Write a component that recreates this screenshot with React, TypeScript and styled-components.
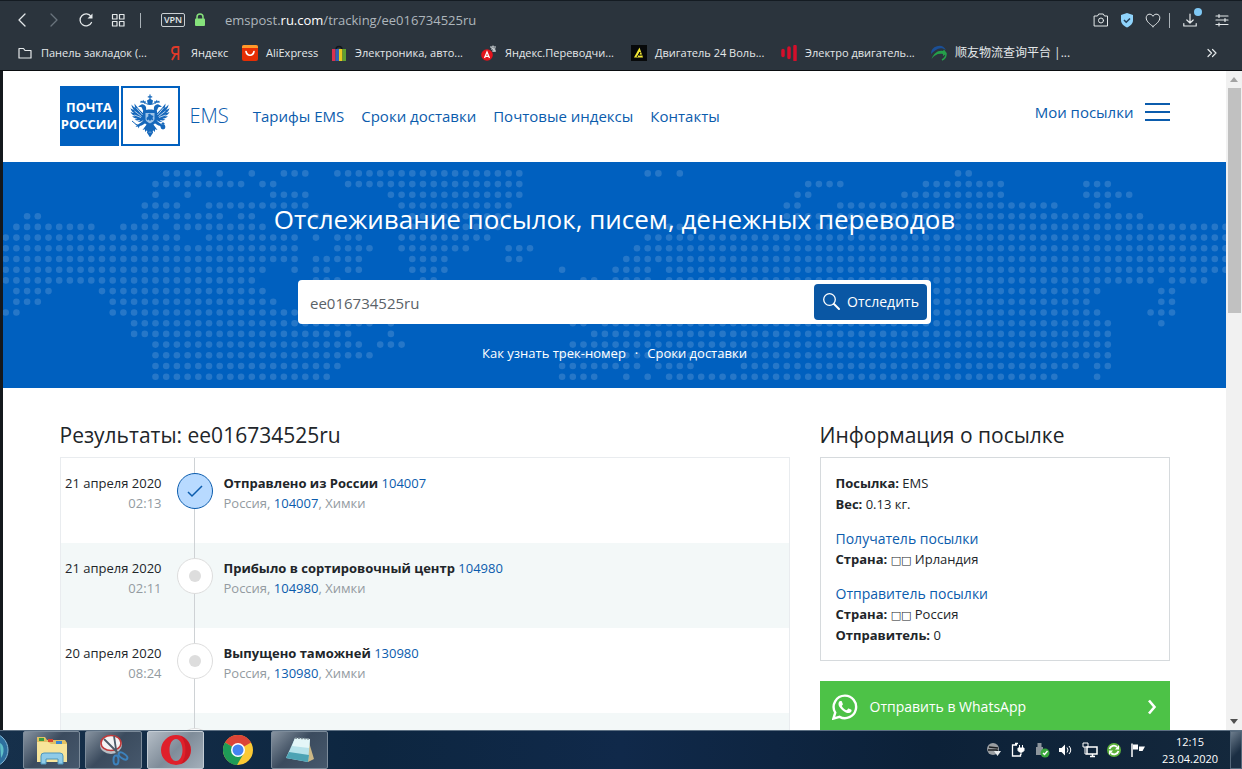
import React from 'react';
import styled, { createGlobalStyle, css } from 'styled-components';

const GlobalStyle = createGlobalStyle`
  *, *::before, *::after { box-sizing: border-box; }
  body {
    margin: 0;
    font-family: 'Open Sans', 'Noto Sans', 'Noto Sans CJK SC', sans-serif;
    font-size: 13px;
    line-height: 20px;
    color: #212529;
  }
  h1, h2, h3, p, ol, ul { margin: 0; padding: 0; font-weight: 400; }
  ol, ul { list-style: none; }
  a { color: #0b5cad; text-decoration: none; }
  button { font: inherit; border: 0; padding: 0; background: none; color: inherit; cursor: pointer; }
  svg { display: block; flex: none; }
`;

const Screen = styled.div`
  display: flex;
  flex-direction: column;
  height: 100vh;
  overflow: hidden;
`;

/* ---------- browser chrome ---------- */

const Chrome = styled.header`
  flex: none;
  background: #2b343d;
  border-top: 1px solid #141b22;
  border-bottom: 1px solid #0a0d10;
  color: #e4e8ea;
`;

const Toolbar = styled.div`
  display: flex;
  align-items: center;
  height: 38px;
  padding: 0 12px 0 14px;
`;

const ToolGroup = styled.div<{ $gap: number }>`
  display: flex;
  align-items: center;
  gap: ${p => p.$gap}px;
`;

const ToolButton = styled.button`
  position: relative;
  width: 16px;
  height: 16px;
`;

const Divider = styled.span<{ $before: number; $after: number }>`
  width: 1px;
  height: 15px;
  margin: 0 ${p => p.$after}px 0 ${p => p.$before}px;
  background: #aab2b8;
`;

const VpnBadge = styled.button`
  width: 24px;
  height: 14px;
  margin: 0 7px 0 6px;
  border: 1px solid #c9ced2;
  border-radius: 2px;
  font-size: 9px;
  line-height: 12px;
  font-weight: 600;
`;

const Address = styled.p`
  flex: 1;
  margin-left: 17px;
  color: #aeb6bc;
  b { font-weight: 400; color: #ffffff; }
`;

const NotifyDot = styled.span`
  position: absolute;
  top: -4px;
  right: -4px;
  width: 8px;
  height: 8px;
  border-radius: 50%;
  background: #7fc8f5;
`;

const Bookmarks = styled.nav`
  display: flex;
  align-items: center;
  gap: 12px;
  height: 31px;
  padding: 0 22px 4px 17px;
`;

const Bookmark = styled.a`
  display: flex;
  align-items: center;
  gap: 8px;
  font-size: 11px;
  color: #e4e8ea;
  &:lang(zh) { font-size: 12px; }
`;

const BookmarkLabel = styled.span<{ $width: number }>`
  width: ${p => p.$width}px;
  white-space: nowrap;
`;

const More = styled.button`
  margin-left: auto;
  width: 16px;
  height: 16px;
`;

/* ---------- page ---------- */

const Viewport = styled.div`
  flex: 1;
  min-height: 0;
  display: flex;
  border-left: 3px solid #14181d;
`;

const Page = styled.div`
  flex: 1;
  min-width: 0;
  overflow: hidden;
  background: #ffffff;
`;

const container = css`
  width: 100%;
  max-width: 1140px;
  margin: 0 auto;
  padding: 0 15px;
`;

const SiteHeader = styled.header`
  ${container}
  display: flex;
  align-items: center;
  height: 91px;
  padding-bottom: 2px;
`;

const Logo = styled.a`
  display: flex;
  align-items: center;
  gap: 2px;
  font-size: 20px;
  font-weight: 300;
`;

const LogoText = styled.span`
  display: flex;
  flex-direction: column;
  align-items: center;
  justify-content: center;
  width: 59px;
  height: 60px;
  background: #0060bf;
  color: #ffffff;
  font-size: 13px;
  font-weight: 700;
  line-height: 17px;
`;

const LogoCrest = styled.span`
  display: flex;
  align-items: center;
  justify-content: center;
  width: 59px;
  height: 60px;
  border: 2px solid #0060bf;
`;

const LogoName = styled.span`
  margin-left: 8px;
  line-height: 28px;
`;

const SiteNav = styled.nav`
  display: flex;
  gap: 17px;
  margin-left: 24px;
  font-size: 15px;
`;

const MyParcels = styled.div`
  display: flex;
  align-items: center;
  gap: 11px;
  margin: 0 0 8px auto;
  font-size: 15px;
`;

const Burger = styled.button`
  display: flex;
  flex-direction: column;
  gap: 6px;
  width: 25px;
  span { height: 2px; background: #0b5cad; }
`;

const Hero = styled.section`
  position: relative;
  display: flex;
  flex-direction: column;
  align-items: center;
  height: 226px;
  overflow: hidden;
  background: #0060bf;
  color: #ffffff;
`;

const MapLayer = styled.div`
  position: absolute;
  inset: 0;
`;

const HeroTitle = styled.h1`
  position: relative;
  margin-top: 39px;
  font-size: 26px;
  line-height: 36px;
`;

const SearchForm = styled.form`
  position: relative;
  display: flex;
  width: 633px;
  max-width: 100%;
  margin-top: 43px;
  padding: 4px;
  border-radius: 4px;
  background: #ffffff;
`;

const SearchInput = styled.input`
  flex: 1;
  min-width: 0;
  height: 36px;
  padding: 2px 8px 0;
  border: 0;
  outline: 0;
  background: none;
  font: inherit;
  font-size: 15px;
  color: #5a6268;
`;

const SearchButton = styled.button`
  display: flex;
  align-items: center;
  justify-content: center;
  gap: 6px;
  width: 113px;
  height: 36px;
  border-radius: 4px;
  background: #0a57a4;
  font-size: 14px;
`;

const HeroLinks = styled.p`
  position: relative;
  display: flex;
  gap: 9px;
  margin-top: 19px;
  a { color: #ffffff; }
`;

const Columns = styled.main`
  ${container}
  display: grid;
  grid-template-columns: minmax(0, 1fr) 350px;
  gap: 30px;
  padding-top: 33px;
`;

const SectionTitle = styled.h2`
  margin-bottom: 7px;
  font-size: 21px;
  line-height: 29px;
`;

const EventList = styled.ol`
  border: 1px solid #e9ecef;
`;

const EventRow = styled.li`
  display: flex;
  height: 85px;
  &:nth-child(even) { background: #f3f8f8; }
`;

const EventTime = styled.div`
  width: 101px;
  padding-top: 15px;
  text-align: right;
  white-space: nowrap;
`;

const Muted = styled.p`
  color: #939ba1;
`;

const Track = styled.div`
  display: flex;
  justify-content: center;
  width: 36px;
  margin: 0 11px 0 15px;
  padding-top: 15px;
  background: linear-gradient(#ced2d5, #ced2d5) 17px 0 / 1px 100% no-repeat;
`;

const Marker = styled.span<{ $done: boolean }>`
  display: flex;
  align-items: center;
  justify-content: center;
  width: 36px;
  height: 36px;
  border-radius: 50%;
  border: 1px solid ${p => (p.$done ? '#0b5cad' : '#dddddd')};
  background: ${p => (p.$done ? '#b8daff' : '#ffffff')};
`;

const Pip = styled.span`
  width: 12px;
  height: 12px;
  border-radius: 50%;
  background: #dddddd;
`;

const EventBody = styled.div`
  padding-top: 15px;
`;

const EventTitle = styled.p`
  b { font-weight: 700; }
`;

const InfoCard = styled.section`
  padding: 15px 15px 14px;
  border: 1px solid #d6dadd;
`;

const InfoLine = styled.p`
  height: 21px;
  line-height: 21px;
  b { font-weight: 700; }
`;

const InfoHeading = styled.h3`
  margin-top: 14px;
  font-size: 14px;
  line-height: 20px;
  color: #0b5cad;
`;

const Flag = styled.span`
  font-family: 'DejaVu Sans', sans-serif;
  font-size: 11px;
  line-height: 1;
`;

const WhatsApp = styled.a`
  display: flex;
  align-items: center;
  height: 52px;
  margin-top: 20px;
  padding: 0 12px;
  gap: 12px;
  background: #4dc247;
  color: #ffffff;
  font-size: 14px;
  svg:last-child { margin-left: auto; }
`;

const Scrollbar = styled.div`
  display: flex;
  flex-direction: column;
  align-items: center;
  justify-content: space-between;
  width: 16px;
  padding: 6px 0;
  background: #f1f1f1;
`;

const ScrollTrack = styled.div`
  flex: 1;
  margin: 6px 0;
`;

const ScrollThumb = styled.div`
  width: 13px;
  height: 225px;
  background: #c1c1c1;
`;

/* ---------- taskbar ---------- */

const Taskbar = styled.footer`
  flex: none;
  display: flex;
  align-items: stretch;
  height: 39px;
  border-top: 1px solid #5c6f82;
  background: linear-gradient(90deg, #16304b 0, #0d2640 30%, #10294a 50%, #0c2138 75%, #14283c 100%);
  color: #ffffff;
`;

const StartEdge = styled.button`
  width: 23px;
  overflow: hidden;
`;

const Tasks = styled.div`
  display: flex;
  gap: 5px;
`;

const TaskButton = styled.button<{ $look: 'open' | 'active' | 'pinned' }>`
  display: flex;
  align-items: center;
  justify-content: center;
  width: 57px;
  height: 38px;
  border-radius: 2px;
  ${p => p.$look === 'open' && css`
    border: 1px solid #7c8b9a;
    background: linear-gradient(135deg, #8793a0, #3b4b5e 45%, #46586c);
  `}
  ${p => p.$look === 'active' && css`
    border: 1px solid #c3ccd4;
    background: linear-gradient(135deg, #b4bdc6, #7f8c99 50%, #a3afba);
  `}
`;

const Tray = styled.div`
  display: flex;
  align-items: center;
  gap: 8px;
  margin-left: auto;
`;

const Clock = styled.time`
  width: 62px;
  margin: 0 9px 0 5px;
  text-align: center;
  font-size: 11px;
  line-height: 17px;
`;

const ShowDesktop = styled.button`
  width: 12px;
  border: 1px solid #54677a;
  background: linear-gradient(135deg, #6c7c8c, #1b2e43 60%);
`;

/* ---------- drawings ---------- */

// Each row lists the filled columns of the dotted world map as "from-to" runs.
const MAP_ROWS = [
  '15-18 20 23 26-28 31-48 60-61 63 89-90',
  '14-22 24-25 32-48 75-78 86-93 101-103',
  '14 17 25-28 36-48 74-75 84-93 101-105',
  '13-16 19-28 37-47 73-74 78-98 102-103',
  '2-3 13-20 22-23 29-30 38-47 65 73-106',
  '1-8 11-14 16-24 38-46 61-64 76-114',
  '0-16 19-27 29 31-33 37-45 60-114',
  '0-27 31-34 37-43 47-49 59-114',
  '0-27 29-33 38-41 47-48 58-114',
  '0-24 27 29-30 32-33 38-41 52 57-60 62-114',
  '0-23 29-31 39-40 54-55 57-60 62-107 109-112',
  '1-4 9-24 87-102 108-109',
  '1-3 10-25 87-101 108-109',
  '0-1 10-27 87-102 107-109',
  '12-34 36 53-54 56-103 108',
  '12-32 36 55-103',
  '14-33 35-37 53-103',
  '14-34 52-103',
  '14-31 52-59 61-64 69-100 102-103',
  '14-30 52-55 58 60 62-98 102',
];

const MAP_DOTS = MAP_ROWS.flatMap((row, r) =>
  row.split(' ').flatMap(run => {
    const [from, to = from] = run.split('-').map(Number);
    return Array.from({ length: to - from + 1 }, (_, i) => ({
      x: 2.7 + (from + i) * 10.7,
      y: 11.4 + r * 10.7,
    }));
  }),
);

const WorldMap = () => (
  <svg width="1223" height="226" viewBox="0 0 1223 226" fill="#ffffff" fillOpacity="0.15" aria-hidden="true">
    {MAP_DOTS.map(d => <circle key={`${d.x}:${d.y}`} cx={d.x} cy={d.y} r="3.3" />)}
  </svg>
);

const line = { fill: 'none', stroke: 'currentColor', strokeLinecap: 'round', strokeLinejoin: 'round' } as const;

const EagleHalf = () => (
  <g>
    <path d="M16 13c-1-2-3-3-4.500-2.500-1.500.5-2 1.500-3.500 2 1.500.5 2 .5 3 .5 1.500.5 1 3 3.500 5l2 2z" />
    <path d="M10 8.500l1-2 1.200 1 1-1.700 1 1.700 1.300-.8.2 2.300z" />
    <path d="M14.500 19C11 18 8 14 4.500 9.500 4.500 12 5 13 5.500 14 4 13 2.500 12 1.500 10.500 1.500 13 3 15 4 16 2.500 15.500 1.500 15 .5 14 1 17 3 18.500 4 19 3 19 1.500 18.500.5 18c1 2.500 3 3.500 5 4-1.500.3-2.500.2-3.500 0 1.500 2 3.500 2.500 5.500 2.500-1 .7-2 1-3 1 2 1.300 4 1 5.500.5-.5 1-1.500 1.500-2.500 2 3 .5 6-1.500 7.500-4z" />
    <path d="M6.500 14l6 7M4.500 17l7 5.500M4.500 21l6.500 2.500M8 13l5 6" fill="none" stroke="#fff" strokeWidth=".7" />
    <path d="M14 26c-2 2-4 3-6 4.500l-3-.5 2 1.500-1.500 1.500 2.500-.5.5 2 1.200-2.500c2.500-.5 5-2 6.300-4z" />
    <path d="M17 30l-4.500 6 2.500-.7v2.700l2-1.700.5 3 2.500-2.300v-7z" />
  </g>
);

const Eagle = () => (
  <svg width="40" height="43" viewBox="0 0 40 43" fill="#1668bb" aria-hidden="true">
    <EagleHalf />
    <g transform="matrix(-1 0 0 1 40 0)"><EagleHalf /></g>
    <path d="M19.400.5h1.200v1.800h1.600v1.100h-1.600V5l2.400 1.500-.8 3.500h-4.400L17 6.500 19.400 5V3.400h-1.600V2.300h1.600z" />
    <path d="M14 9c2 0 3 1.500 6 1.500S24 9 26 9" fill="none" stroke="#1668bb" />
    <path d="M13 17c4-2 10-2 14 0v8c0 4-4 6-7 7.500-3-1.500-7-3.500-7-7.500z" />
    <path d="M15.500 19h9v6c0 2.500-3 3.500-4.500 4.500-1.500-1-4.500-2-4.500-4.500z" fill="#9cc3e8" />
    <path d="M16.500 24l2-2-.5-1.500 2-1 1 1.500 2.500 1-1 2 1 2.500-2-1-1.500 1.500-1.500-1.500-1.500 1z" />
    <path d="M20 33v9M17.500 38l2.500 4 2.500-4" fill="none" stroke="#1668bb" strokeWidth="1.500" />
    <path d="M2 27l6 5" stroke="#1668bb" fill="none" />
    <circle cx="33" cy="33" r="2.400" />
    <path d="M33 28v3M31.500 29.500h3" stroke="#1668bb" />
  </svg>
);

const Icon = ({ children, size = 16 }: { children: React.ReactNode; size?: number }) => (
  <svg width={size} height={size} viewBox="0 0 16 16" aria-hidden="true">{children}</svg>
);

const BackIcon = () => <Icon><path {...line} strokeWidth="1.300" d="M11 2L5 8l6 6" /></Icon>;
const ForwardIcon = () => <Icon><path {...line} stroke="#6a747d" strokeWidth="1.300" d="M5 2l6 6-6 6" /></Icon>;
const ReloadIcon = () => (
  <Icon><path {...line} strokeWidth="1.300" d="M13.500 10.500A6 6 0 1 1 13 4.500" /><path fill="currentColor" d="M14.500 1.500v5h-5z" /></Icon>
);
const TilesIcon = () => (
  <Icon><path {...line} strokeWidth="1.200" d="M2.500 2.500h4.500v4.500h-4.500zM9.500 2.500h4.500v4.500h-4.500zM2.500 9.500h4.500v4.500h-4.500zM9.500 9.500h4.500v4.500h-4.500z" /></Icon>
);
const LockIcon = () => (
  <Icon><path d="M5 8V5a3 3 0 0 1 6 0v3" fill="none" stroke="#86e27c" strokeWidth="1.500" /><rect x="3" y="6.500" width="10" height="7.500" rx="1" fill="#86e27c" /></Icon>
);
const CameraIcon = () => (
  <Icon><path {...line} d="M1.500 4h3l1.200-2h4.600l1.200 2h3v10h-13z" /><circle cx="8" cy="8.500" r="2.500" {...line} /></Icon>
);
const ShieldIcon = () => (
  <Icon><path fill="#8fd3fb" d="M8 1l6 2v5c0 4-3 6-6 7.500C5 14 2 12 2 8V3z" /><path d="M5 8l2.200 2.200L11 6.500" fill="none" stroke="#24405a" strokeWidth="1.600" /></Icon>
);
const HeartIcon = () => (
  <Icon><path {...line} d="M8 14.500C4 11.500 1.200 9 1.200 5.800c0-4 5-5 6.800-1.500 1.800-3.500 6.800-2.500 6.800 1.500 0 3.200-2.800 5.700-6.800 8.700z" /></Icon>
);
const DownloadIcon = () => (
  <Icon><path {...line} strokeWidth="1.200" d="M8 2v9M4.800 8L8 11l3.200-3M1.800 11.500V14h12.400v-2.500" /></Icon>
);
const SettingsIcon = () => (
  <Icon><path {...line} strokeWidth="1.200" d="M2 4h12M2 8h12M2 12.500h12M5 2.500v3M11 6.500v3M5 11v3" /></Icon>
);
const FolderIcon = () => (
  <Icon><path {...line} strokeWidth="1.200" d="M2 13V3.500h4.500l1.500 2h6V13z" /></Icon>
);
const YandexIcon = () => (
  <Icon><path d="M11.500 1v14M11.500 2H8.500c-4.500 0-4.500 7 0 7h3M8.500 9L5 15" fill="none" stroke="#e03a2a" strokeWidth="1.800" /></Icon>
);
const AliIcon = () => (
  <Icon><rect width="16" height="16" rx="2" fill="#e62e04" /><path d="M2 0h12a2 2 0 0 1 2 2v1H0V2a2 2 0 0 1 2-2z" fill="#ff9a2a" /><path d="M4 6.500c1 5 7 5 8 0" fill="none" stroke="#fff" strokeWidth="1.600" strokeLinecap="round" /></Icon>
);
const BagIcon = () => (
  <Icon>
    <path d="M5 4.500C5 .5 11 .5 11 4.500" fill="none" stroke="#11151a" strokeWidth="1.400" />
    <path fill="#d9304f" d="M1 4h3.500v12H1z" /><path fill="#2f62b5" d="M4.500 4H8v12H4.500z" /><path fill="#e9c91f" d="M8 4h3.500v12H8z" /><path fill="#5ea032" d="M11.500 4H15v12h-3.500z" />
  </Icon>
);
const TranslateIcon = () => (
  <Icon>
    <circle cx="6" cy="10" r="5.800" fill="#e3131c" />
    <path d="M3.500 13L6 7l2.500 6M4.500 11.300h3" fill="none" stroke="#fff" strokeWidth="1.300" />
    <path d="M9 2h6M12 .5v2M10 4h4.500M11 6h4M13 3v4M10.500 2.500l4 3.500" fill="none" stroke="#d5dade" />
  </Icon>
);
const MotorIcon = () => (
  <Icon><rect width="16" height="16" fill="#07090a" /><path d="M3 12.500L8.500 2.500 12 12.500z" fill="#f2e835" /><path d="M6 12l3-5-1 3.200L11 10" fill="none" stroke="#07090a" /></Icon>
);
const BarsIcon = () => (
  <Icon><path d="M2 5.500v5M8 3v9.500M14 1.500v13.500" stroke="#d40f2b" strokeWidth="3.500" strokeLinecap="round" /></Icon>
);
const LogisticsIcon = () => (
  <Icon><path d="M0 9A8 8 0 0 1 15 5C9 1 5 4 0 9z" fill="#1b4f96" /><path d="M.5 14C3 8 7 5 12 6l1-1.500 3 4-4 2.500v-2C7 8 3.500 10 .5 14z" fill="#25a04a" /><path d="M15 9c0 3-2 5-4 6" stroke="#25a04a" strokeWidth="1.500" fill="none" /></Icon>
);
const MoreIcon = () => <Icon><path {...line} strokeWidth="1.200" d="M4 4.500L7.500 8 4 11.500M8.500 4.500L12 8l-3.500 3.500" /></Icon>;

const SearchIcon = () => (
  <svg width="19" height="19" viewBox="0 0 19 19" aria-hidden="true">
    <circle cx="7.500" cy="6.500" r="5.800" {...line} strokeWidth="1.300" /><path {...line} strokeWidth="2" d="M12 11l5 5" />
  </svg>
);
const CheckIcon = () => (
  <svg width="16" height="14" viewBox="0 0 16 14" aria-hidden="true">
    <path d="M1 8l4 4L15 2" fill="none" stroke="#0b5cad" strokeWidth="1.500" />
  </svg>
);
const WhatsAppIcon = () => (
  <svg width="26" height="26" viewBox="0 0 24 24" fill="#ffffff" aria-hidden="true">
    <path d="M17.472 14.382c-.297-.149-1.758-.867-2.030-.967-.273-.099-.471-.148-.670.150-.197.297-.767.966-.940 1.164-.173.199-.347.223-.644.075-.297-.150-1.255-.463-2.390-1.475-.883-.788-1.480-1.761-1.653-2.059-.173-.297-.018-.458.130-.606.134-.133.298-.347.446-.520.149-.174.198-.298.298-.497.099-.198.050-.371-.025-.520-.075-.149-.669-1.612-.916-2.207-.242-.579-.487-.500-.669-.510-.173-.008-.371-.010-.570-.010-.198 0-.520.074-.792.372-.272.297-1.040 1.016-1.040 2.479 0 1.462 1.065 2.875 1.213 3.074.149.198 2.096 3.200 5.077 4.487.709.306 1.262.489 1.694.625.712.227 1.360.195 1.871.118.571-.085 1.758-.719 2.006-1.413.248-.694.248-1.289.173-1.413-.074-.124-.272-.198-.570-.347z" />
    <path d="M12 1.500A10.400 10.400 0 0 0 3 17.200L1.300 22.700 7 21.100A10.400 10.400 0 1 0 12 1.500z" fill="none" stroke="#fff" strokeWidth="2.200" />
  </svg>
);
const ChevronIcon = () => (
  <svg width="12" height="16" viewBox="0 0 12 16" aria-hidden="true"><path d="M3 1.500L8.500 8 3 14.500" fill="none" stroke="#fff" strokeWidth="2.600" /></svg>
);
const Arrow = ({ down = false }: { down?: boolean }) => (
  <svg width="8" height="5" viewBox="0 0 8 5" aria-hidden="true"><path d={down ? 'M0 0h8L4 5z' : 'M0 5h8L4 0z'} fill={down ? '#505050' : '#a3a3a3'} /></svg>
);

const StartOrb = () => (
  <svg width="10" height="38" viewBox="0 0 10 38" aria-hidden="true">
    <circle cx="-9" cy="19" r="17" fill="#2d6f9e" stroke="#86b8d6" /><path d="M0 12c4 2 5 9 1 15z" fill="#5fc0c8" />
  </svg>
);
const ExplorerIcon = () => (
  <svg width="34" height="32" viewBox="0 0 34 32" aria-hidden="true">
    <path d="M2 3h8l2 3h18l2 3v18H2z" fill="#e2c163" /><path d="M4 4h5v3H4z" fill="#3b9b3f" /><path d="M13 5h5v3h-5z" fill="#d8452f" /><path d="M21 7h6v3h-6z" fill="#3b86d0" />
    <path d="M2 8h11l3 2h16v18H2z" fill="#f7e49a" />
    <path d="M6 30V22q0-3 3-3h16q3 0 3 3v8h-5v-5H11v5z" fill="#8fcbe8" stroke="#4c96bd" />
  </svg>
);
const SnipIcon = () => (
  <svg width="34" height="34" viewBox="0 0 34 34" aria-hidden="true">
    <ellipse cx="14" cy="12" rx="11" ry="9" fill="#b9bec4" /><ellipse cx="14" cy="10" rx="10" ry="7.500" fill="#f4f4f4" stroke="#c23a3a" strokeWidth="1.600" />
    <path d="M7 6l16 16M17 3l3 20" stroke="#4d5a66" strokeWidth="1.800" />
    <ellipse cx="19" cy="27" rx="2.500" ry="4.500" fill="none" stroke="#3c82bd" strokeWidth="2" /><ellipse cx="26" cy="23" rx="5" ry="2.500" transform="rotate(35 26 23)" fill="none" stroke="#3c82bd" strokeWidth="2" />
  </svg>
);
const OperaIcon = () => (
  <svg width="32" height="32" viewBox="0 0 32 32" aria-hidden="true">
    <path fillRule="evenodd" fill="#e0202b" d="M16 1a15 15 0 1 0 0 30 15 15 0 0 0 0-30zm0 4c4 0 6.500 5 6.500 11S20 27 16 27s-6.500-5-6.500-11S12 5 16 5z" />
    <path d="M21 2a15 15 0 0 1 0 28c6-7 6-21 0-28z" fill="#b3121d" fillOpacity=".5" />
  </svg>
);
const ChromeIcon = () => (
  <svg width="30" height="30" viewBox="0 0 30 30" aria-hidden="true">
    <circle cx="15" cy="15" r="15" fill="#fbc934" />
    <path d="M15 15L2 7.500a15 15 0 0 1 26 0z" fill="#dc4437" /><path d="M2 7.500A15 15 0 0 0 14 30l7-12-6-3z" fill="#1e9c57" /><path d="M15 8h13.300L28 7.500 15 5z" fill="#dc4437" />
    <circle cx="15" cy="15" r="7" fill="#fff" /><circle cx="15" cy="15" r="5.500" fill="#4584f0" />
  </svg>
);
const NotepadIcon = () => (
  <svg width="32" height="30" viewBox="0 0 32 30" aria-hidden="true">
    <path d="M24 4l6 20-6 3z" fill="#cdb886" /><path d="M11 3l15 1-2 23-22-4z" fill="#b7e2ea" /><path d="M11 3l15 1-1 9-17-2z" fill="#e4f6f8" /><path d="M5 17l20 3-1 7-22-4z" fill="#4da3b4" /><path d="M11 3l15 1" stroke="#7d8c94" strokeWidth="1.500" strokeDasharray="2 1" />
  </svg>
);

const TRAY_ICONS: { label: string; drawing: React.ReactNode }[] = [
  { label: 'Язык', drawing: <><circle cx="7" cy="7" r="6" fill="#9a9ea2" /><path d="M3 5l9 1M2 8h9l1 3" stroke="#1c1f22" strokeWidth="1.500" fill="none" /><path d="M8 9h7l-3.500 5z" fill="#e9ecee" /></> },
  { label: 'Питание', drawing: <><path d="M7 3H2.500v11h8v-2M5 1.500h3" stroke="#fff" strokeWidth="1.300" fill="none" /><path d="M8 6h6v2.500L12.500 10h-3L8 8.500zM9.500 3v3M12.500 3v3M11 10v3" fill="#fff" stroke="#fff" /></> },
  { label: 'Устройства', drawing: <><path d="M2 5h7v8H2zM3.500 1h4v4h-4z" fill="#8d959c" /><circle cx="11" cy="11" r="4.500" fill="#39a83c" /><path d="M9 11l1.500 1.500L13.500 9" stroke="#fff" strokeWidth="1.400" fill="none" /></> },
  { label: 'Громкость', drawing: <><path d="M1 6h2.500L7 2.500v11L3.500 10H1z" fill="#fff" /><path d="M9 5.500q2 2.500 0 5M11 4q3.500 4 0 8" stroke="#fff" fill="none" /></> },
  { label: 'Сеть', drawing: <><path d="M5 5h10v7H5zM8 14.500h5M10.500 12v2" stroke="#fff" strokeWidth="1.500" fill="none" /><path d="M1 1h5v4H1zM3 5v7h2" stroke="#fff" fill="none" /></> },
  { label: 'Обновление', drawing: <><circle cx="8" cy="8" r="7" fill="#5db23b" /><path d="M3.500 7A4.500 4.500 0 0 1 11 5M12.500 9A4.500 4.500 0 0 1 5 11" stroke="#fff" strokeWidth="1.800" fill="none" /><path d="M13 3v4.500H9zM3 13V8.500h4z" fill="#fff" /></> },
  { label: 'Центр поддержки', drawing: <><path d="M2 1.500V15" stroke="#fff" strokeWidth="1.500" /><path d="M3 2.500h5v5H3zM9 4.500h6L12.500 9H9z" fill="#fff" /></> },
];

/* ---------- content ---------- */

const BOOKMARKS = [
  { label: 'Панель закладок (...', width: 114, icon: <FolderIcon /> },
  { label: 'Яндекс', width: 39, icon: <YandexIcon /> },
  { label: 'AliExpress', width: 53, icon: <AliIcon /> },
  { label: 'Электроника, авто...', width: 114, icon: <BagIcon /> },
  { label: 'Яндекс.Переводчи...', width: 114, icon: <TranslateIcon /> },
  { label: 'Двигатель 24 Воль...', width: 114, icon: <MotorIcon /> },
  { label: 'Электро двигатель...', width: 114, icon: <BarsIcon /> },
  { label: '顺友物流查询平台 |...', width: 114, icon: <LogisticsIcon />, lang: 'zh' },
];

const EVENTS = [
  { date: '21 апреля 2020', time: '02:13', title: 'Отправлено из России', code: '104007' },
  { date: '21 апреля 2020', time: '02:11', title: 'Прибыло в сортировочный центр', code: '104980' },
  { date: '20 апреля 2020', time: '08:24', title: 'Выпущено таможней', code: '130980' },
];

const App = () => (
  <Screen>
    <GlobalStyle />
    <Chrome>
      <Toolbar>
        <ToolGroup $gap={16}>
          <ToolButton aria-label="Назад"><BackIcon /></ToolButton>
          <ToolButton aria-label="Вперёд"><ForwardIcon /></ToolButton>
          <ToolButton aria-label="Обновить"><ReloadIcon /></ToolButton>
          <ToolButton aria-label="Экспресс-панель"><TilesIcon /></ToolButton>
        </ToolGroup>
        <Divider $before={14} $after={14} />
        <VpnBadge>VPN</VpnBadge>
        <LockIcon />
        <Address>emspost.<b>ru.com</b>/tracking/ee016734525ru</Address>
        <ToolGroup $gap={10}>
          <ToolButton aria-label="Снимок"><CameraIcon /></ToolButton>
          <ToolButton aria-label="Защита"><ShieldIcon /></ToolButton>
          <ToolButton aria-label="Избранное"><HeartIcon /></ToolButton>
        </ToolGroup>
        <Divider $before={8} $after={12} />
        <ToolGroup $gap={16}>
          <ToolButton aria-label="Загрузки"><DownloadIcon /><NotifyDot /></ToolButton>
          <ToolButton aria-label="Настройки"><SettingsIcon /></ToolButton>
        </ToolGroup>
      </Toolbar>
      <Bookmarks>
        {BOOKMARKS.map(b => (
          <Bookmark key={b.label} href="#" lang={b.lang}>{b.icon}<BookmarkLabel $width={b.width}>{b.label}</BookmarkLabel></Bookmark>
        ))}
        <More aria-label="Ещё закладки"><MoreIcon /></More>
      </Bookmarks>
    </Chrome>

    <Viewport>
      <Page>
        <SiteHeader>
          <Logo href="#">
            <LogoText><span>ПОЧТА</span><span>РОССИИ</span></LogoText>
            <LogoCrest><Eagle /></LogoCrest>
            <LogoName>EMS</LogoName>
          </Logo>
          <SiteNav>
            <a href="#">Тарифы EMS</a>
            <a href="#">Сроки доставки</a>
            <a href="#">Почтовые индексы</a>
            <a href="#">Контакты</a>
          </SiteNav>
          <MyParcels>
            <a href="#">Мои посылки</a>
            <Burger aria-label="Меню"><span /><span /><span /></Burger>
          </MyParcels>
        </SiteHeader>

        <Hero>
          <MapLayer><WorldMap /></MapLayer>
          <HeroTitle>Отслеживание посылок, писем, денежных переводов</HeroTitle>
          <SearchForm onSubmit={e => e.preventDefault()}>
            <SearchInput aria-label="Трек-номер" defaultValue="ee016734525ru" />
            <SearchButton type="submit"><SearchIcon />Отследить</SearchButton>
          </SearchForm>
          <HeroLinks>
            <a href="#">Как узнать трек-номер</a><span>·</span><a href="#">Сроки доставки</a>
          </HeroLinks>
        </Hero>

        <Columns>
          <section>
            <SectionTitle>Результаты: ee016734525ru</SectionTitle>
            <EventList>
              {EVENTS.map((e, i) => (
                <EventRow key={e.time}>
                  <EventTime><p>{e.date}</p><Muted>{e.time}</Muted></EventTime>
                  <Track><Marker $done={i === 0}>{i === 0 ? <CheckIcon /> : <Pip />}</Marker></Track>
                  <EventBody>
                    <EventTitle><b>{e.title}</b> <a href="#">{e.code}</a></EventTitle>
                    <Muted>Россия, <a href="#">{e.code}</a>, Химки</Muted>
                  </EventBody>
                </EventRow>
              ))}
              <EventRow><EventTime /><Track><Marker $done={false}><Pip /></Marker></Track></EventRow>
            </EventList>
          </section>
          <aside>
            <SectionTitle>Информация о посылке</SectionTitle>
            <InfoCard>
              <InfoLine><b>Посылка:</b> EMS</InfoLine>
              <InfoLine><b>Вес:</b> 0.13 кг.</InfoLine>
              <InfoHeading>Получатель посылки</InfoHeading>
              <InfoLine><b>Страна:</b> <Flag>□□</Flag> Ирландия</InfoLine>
              <InfoHeading>Отправитель посылки</InfoHeading>
              <InfoLine><b>Страна:</b> <Flag>□□</Flag> Россия</InfoLine>
              <InfoLine><b>Отправитель:</b> 0</InfoLine>
            </InfoCard>
            <WhatsApp href="#"><WhatsAppIcon />Отправить в WhatsApp<ChevronIcon /></WhatsApp>
          </aside>
        </Columns>
      </Page>
      <Scrollbar>
        <Arrow />
        <ScrollTrack><ScrollThumb /></ScrollTrack>
        <Arrow down />
      </Scrollbar>
    </Viewport>

    <Taskbar>
      <StartEdge aria-label="Пуск"><StartOrb /></StartEdge>
      <Tasks>
        <TaskButton $look="open" aria-label="Проводник"><ExplorerIcon /></TaskButton>
        <TaskButton $look="open" aria-label="Ножницы"><SnipIcon /></TaskButton>
        <TaskButton $look="active" aria-label="Opera"><OperaIcon /></TaskButton>
        <TaskButton $look="pinned" aria-label="Chrome"><ChromeIcon /></TaskButton>
        <TaskButton $look="open" aria-label="Блокнот"><NotepadIcon /></TaskButton>
      </Tasks>
      <Tray>
        {TRAY_ICONS.map(t => <button key={t.label} aria-label={t.label}><Icon>{t.drawing}</Icon></button>)}
        <Clock>12:15<br />23.04.2020</Clock>
      </Tray>
      <ShowDesktop aria-label="Показать рабочий стол" />
    </Taskbar>
  </Screen>
);

export default App;
